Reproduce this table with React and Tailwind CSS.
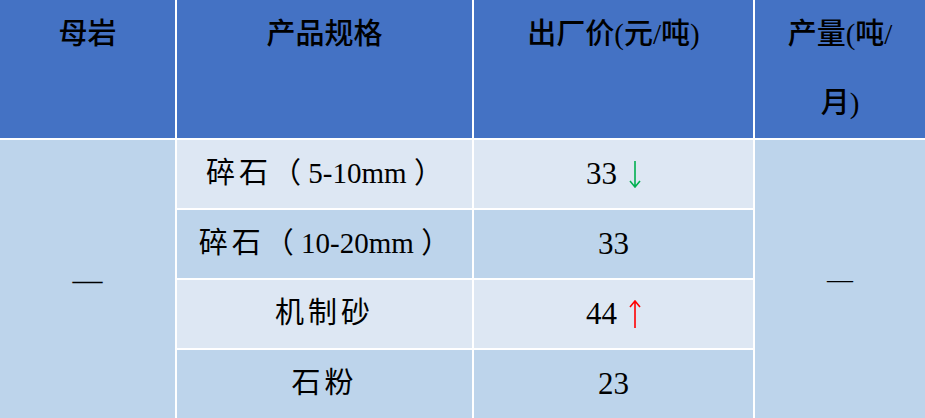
import React from 'react';

const serif = { fontFamily: '"Liberation Serif", "Noto Sans CJK SC", serif' };

function DownArrow() {
    return (
        <svg width="12" height="27" viewBox="0 0 12 27" className="inline-block ml-3 align-[-8px]">
            <path d="M6 0 V26 M1 20 L6 26 L11 20" stroke="#00b050" strokeWidth="1.6" fill="none" />
        </svg>
    );
}

function UpArrow() {
    return (
        <svg width="12" height="28" viewBox="0 0 12 28" className="inline-block ml-3 align-[-10px]">
            <path d="M6 28 V1 M1 7 L6 1 L11 7" stroke="#ff0000" strokeWidth="1.6" fill="none" />
        </svg>
    );
}

export default function App() {
    const rows = [
        { name: '碎石', size: '5-10mm', price: '33', arrow: <DownArrow />, bg: 'bg-[#dde7f3]' },
        { name: '碎石', size: '10-20mm', price: '33', arrow: null, bg: 'bg-[#bdd4eb]' },
        { name: '机制砂', price: '44', arrow: <UpArrow />, bg: 'bg-[#dde7f3]' },
        { name: '石粉', price: '23', arrow: null, bg: 'bg-[#bdd4eb]' },
    ];

    return (
        <div className="w-[925px] h-[418px] overflow-hidden bg-white" style={serif}>
            <div className="grid grid-cols-[175px_295px_279px_1fr] grid-rows-[138px_68px_68px_68px_68px] gap-[2px] bg-white text-black">
                {/* Header */}
                <div className="bg-[#4472c4] text-center text-[29px] leading-[69px] font-medium">母岩</div>
                <div className="bg-[#4472c4] text-center text-[29px] leading-[69px] font-medium">产品规格</div>
                <div className="bg-[#4472c4] text-center text-[29px] leading-[69px] font-medium">出厂价(元/吨)</div>
                <div className="bg-[#4472c4] text-center text-[29px] leading-[69px] font-medium">
                    产量(吨/<br />月)
                </div>

                {/* Merged left */}
                <div className="row-span-4 col-start-1 row-start-2 bg-[#bdd4eb] flex items-center justify-center text-[30px]">
                    —
                </div>

                {rows.map((r, i) => (
                    <React.Fragment key={i}>
                        <div className={`${r.bg} col-start-2 flex items-center justify-center text-[29px] whitespace-pre`}>
                            <span className="tracking-[4px]">{r.name}</span>
                            {r.size && <span>{'（ ' + r.size + ' ）'}</span>}
                        </div>
                        <div className={`${r.bg} col-start-3 flex items-center justify-center text-[31px]`}>
                            <span>{r.price}</span>
                            {r.arrow}
                        </div>
                    </React.Fragment>
                ))}

                {/* Merged right */}
                <div className="row-span-4 col-start-4 row-start-2 bg-[#bdd4eb] flex items-center justify-center text-[26px]">
                    —
                </div>
            </div>
        </div>
    );
}
